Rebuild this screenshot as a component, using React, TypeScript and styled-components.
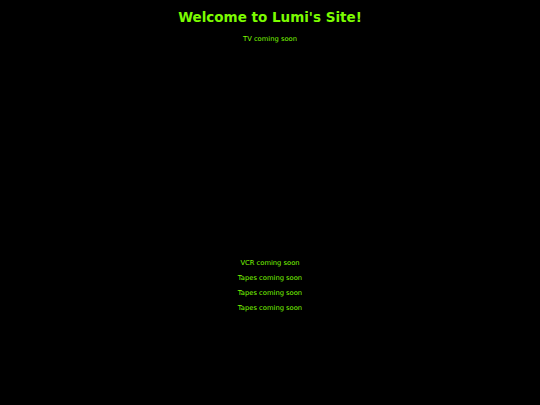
import { createGlobalStyle, styled } from 'styled-components';

const GlobalStyle = createGlobalStyle`
  html, body {
    margin: 0;
    padding: 0;
    background: #000;
  }
  body {
    font-family: "DejaVu Sans", Verdana, sans-serif;
    color: #7cfc00;
  }
`;

const Page = styled.main`
  display: flex;
  flex-direction: column;
  align-items: center;
  min-height: 405px;
  padding-top: 9px;
  box-sizing: border-box;
`;

const Title = styled.h1`
  font-size: 13.5px;
  font-weight: bold;
  margin: 0;
  line-height: 17px;
`;

const TvSlot = styled.section`
  display: flex;
  flex-direction: column;
  align-items: center;
  height: 224px;
  margin-top: 6px;
`;

const Note = styled.p`
  font-size: 6.75px;
  line-height: 15px;
  margin: 0;
`;

const Shelf = styled.section`
  display: flex;
  flex-direction: column;
  align-items: center;
`;

const App = () => (
  <>
    <GlobalStyle />
    <Page>
      <Title>Welcome to Lumi's Site!</Title>
      <TvSlot>
        <Note>TV coming soon</Note>
      </TvSlot>
      <Shelf>
        <Note>VCR coming soon</Note>
        <Note>Tapes coming soon</Note>
        <Note>Tapes coming soon</Note>
        <Note>Tapes coming soon</Note>
      </Shelf>
    </Page>
  </>
);

export default App;
